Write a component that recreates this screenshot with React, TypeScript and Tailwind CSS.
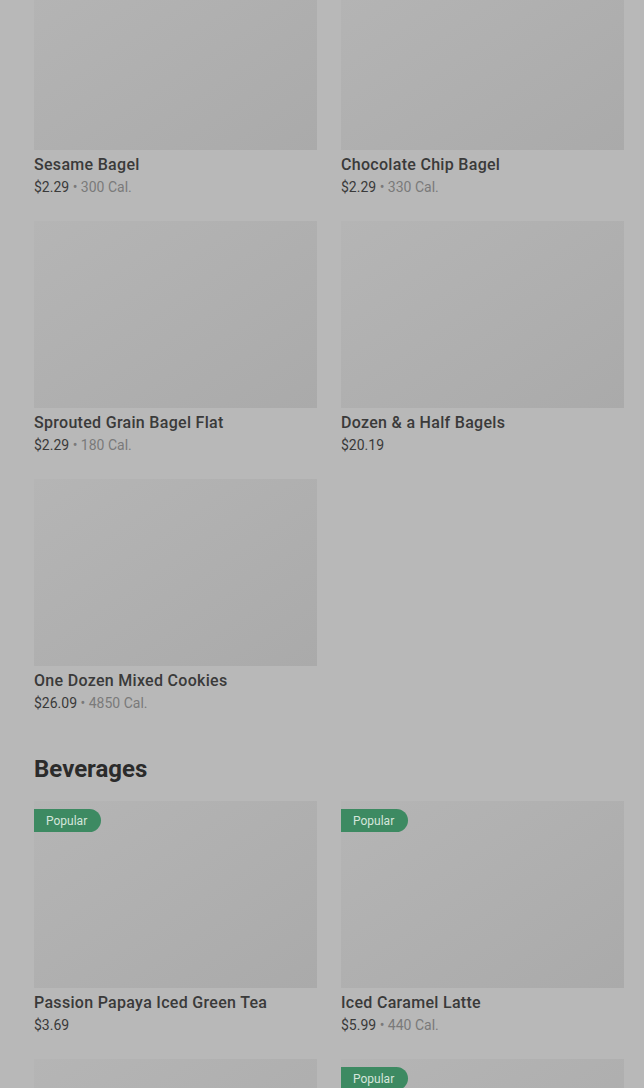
type Item = {
  name: string
  price: string
  cal?: string
  popular?: boolean
}

const food: Item[] = [
  { name: "Sesame Bagel", price: "$2.29", cal: "300 Cal." },
  { name: "Chocolate Chip Bagel", price: "$2.29", cal: "330 Cal." },
  { name: "Sprouted Grain Bagel Flat", price: "$2.29", cal: "180 Cal." },
  { name: "Dozen & a Half Bagels", price: "$20.19" },
  { name: "One Dozen Mixed Cookies", price: "$26.09", cal: "4850 Cal." },
]

const beverages: Item[] = [
  { name: "Passion Papaya Iced Green Tea", price: "$3.69", popular: true },
  { name: "Iced Caramel Latte", price: "$5.99", cal: "440 Cal.", popular: true },
  { name: "Iced Coffee", price: "$3.49" },
  { name: "Hot Chocolate", price: "$3.99", popular: true },
]

function ItemCard({ item }: { item: Item }) {
  return (
    <div className="flex flex-col">
      <div className="relative h-[187px] bg-linear-to-br from-[#b5b5b5] to-[#aaaaaa]">
        {item.popular && (
          <span className="absolute left-0 top-2 flex h-[23px] items-center rounded-r-full bg-[#3d8a62] pl-3 pr-[14px] text-xs text-[#d5e6dc]">
            Popular
          </span>
        )}
      </div>
      <p className="mt-[3px] text-base leading-6 font-medium tracking-[0.3px] text-[#3a3a3a]">{item.name}</p>
      <p className="text-sm leading-5 text-[#3a3a3a]">
        {item.price}
        {item.cal && <span className="text-[#7a7a7a]"> • {item.cal}</span>}
      </p>
    </div>
  )
}

export default function App() {
  return (
    <div className="h-[1088px] overflow-hidden bg-[#b8b8b8] font-['Roboto',sans-serif]">
      <div className="mt-[-37px] pl-[34px] pr-5">
        <div className="grid grid-cols-2 gap-x-6 gap-y-6">
          {food.map((item) => (
            <ItemCard key={item.name} item={item} />
          ))}
        </div>

        <h2 className="mt-[40px] mb-[16px] text-2xl leading-8 font-bold text-[#2b2b2b]">
          Beverages
        </h2>

        <div className="grid grid-cols-2 gap-x-6 gap-y-6">
          {beverages.map((item) => (
            <ItemCard key={item.name} item={item} />
          ))}
        </div>
      </div>
    </div>
  )
}
